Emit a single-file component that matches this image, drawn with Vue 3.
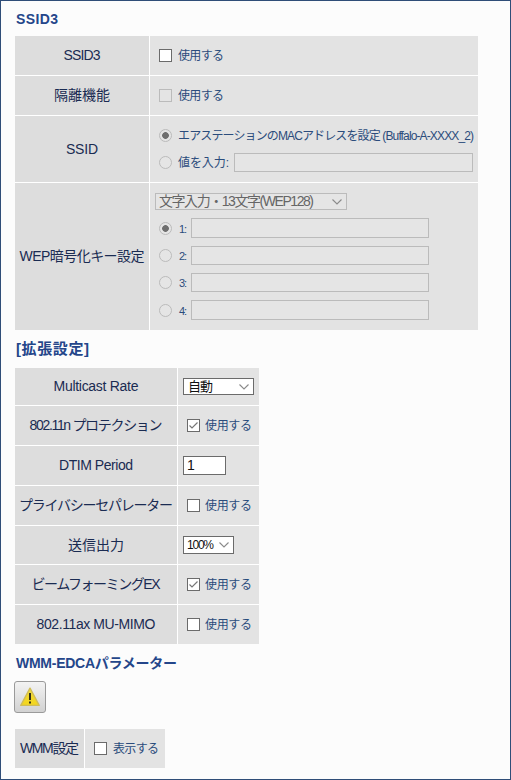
<script setup>
import { ref } from 'vue';

const ssidEnabled = ref(false);
const isolation = ref(false);
const ssidMode = ref('mac');
const ssidValue = ref('');
const wepIndex = ref(1);
const wepKeys = ref(['', '', '', '']);

const advanced = ref([
  { id: 'rate', label: 'Multicast Rate', fit: 85, type: 'select', value: '自動', valueFit: 25 },
  { id: 'protection', label: '802.11n プロテクション', fit: 133, type: 'check', value: true },
  { id: 'dtim', label: 'DTIM Period', fit: 74, type: 'text', value: '1' },
  { id: 'privacy', label: 'プライバシーセパレーター', fit: 154, type: 'check', value: false },
  { id: 'power', label: '送信出力', fit: 56, type: 'select', value: '100%', valueFit: 27 },
  { id: 'beam', label: 'ビームフォーミングEX', fit: 129, type: 'check', value: true },
  { id: 'mumimo', label: '802.11ax MU-MIMO', fit: 119, type: 'check', value: false },
]);

const wmmVisible = ref(false);

// Spreads the letters of an element so the text fills the given width
const vFit = {
  mounted(el, { value }) {
    const count = el.textContent.trim().length;
    const natural = el.getBoundingClientRect().width;
    el.style.letterSpacing = `${(value - natural) / Math.max(count - 1, 1)}px`;
    el.style.width = `${value}px`;
  },
};
</script>

<template>
  <div class="panel">
    <h2 class="heading"><span v-fit="42">SSID3</span></h2>

    <div class="table ssid">
      <div class="row">
        <div class="label"><span v-fit="37">SSID3</span></div>
        <div class="cell">
          <label class="option">
            <input v-model="ssidEnabled" type="checkbox" />
            <span v-fit="46">使用する</span>
          </label>
        </div>
      </div>
      <div class="row">
        <div class="label"><span v-fit="56">隔離機能</span></div>
        <div class="cell">
          <label class="option">
            <input v-model="isolation" type="checkbox" disabled />
            <span v-fit="46">使用する</span>
          </label>
        </div>
      </div>
      <div class="row mode">
        <div class="label"><span v-fit="32">SSID</span></div>
        <div class="cell stack">
          <label class="option">
            <input v-model="ssidMode" type="radio" value="mac" disabled />
            <span v-fit="296">エアステーションのMACアドレスを設定 (Buffalo-A-XXXX_2)</span>
          </label>
          <label class="option">
            <input v-model="ssidMode" type="radio" value="manual" disabled />
            <span v-fit="51">値を入力:</span>
            <input v-model="ssidValue" class="field ssid-field" type="text" disabled />
          </label>
        </div>
      </div>
      <div class="row wep">
        <div class="label"><span v-fit="125">WEP暗号化キー設定</span></div>
        <div class="cell stack">
          <div class="select disabled wep-select">
            <span v-fit="155">文字入力・13文字(WEP128)</span>
            <svg class="chevron" viewBox="0 0 10 6"><path d="M0.5 0.5 5 5 9.5 0.5" /></svg>
          </div>
          <label v-for="(key, i) in wepKeys" :key="i" class="option key">
            <input v-model="wepIndex" type="radio" name="wep" :value="i + 1" disabled />
            <span class="num" v-fit="8">{{ i + 1 }}:</span>
            <input v-model="wepKeys[i]" class="field key-field" type="text" disabled />
          </label>
        </div>
      </div>
    </div>

    <h2 class="heading advanced-heading"><span v-fit="73">[拡張設定]</span></h2>

    <div class="table advanced">
      <div v-for="item in advanced" :key="item.id" class="row" :class="item.id">
        <div class="label"><span v-fit="item.fit">{{ item.label }}</span></div>
        <div class="cell">
          <div v-if="item.type === 'select'" class="select">
            <span v-fit="item.valueFit">{{ item.value }}</span>
            <svg class="chevron" viewBox="0 0 10 6"><path d="M0.5 0.5 5 5 9.5 0.5" /></svg>
          </div>
          <input v-else-if="item.type === 'text'" v-model="item.value" class="field dtim-field" type="text" />
          <label v-else class="option">
            <input v-model="item.value" type="checkbox" />
            <span v-fit="47">使用する</span>
          </label>
        </div>
      </div>
    </div>

    <h2 class="heading wmm-heading"><span v-fit="161">WMM-EDCAパラメーター</span></h2>

    <button class="warn-btn" type="button">
      <svg viewBox="0 0 20 20" width="20" height="20">
        <defs>
          <linearGradient id="warn" x1="0" y1="0" x2="0" y2="1">
            <stop offset="0" stop-color="#f3dc3c" />
            <stop offset="1" stop-color="#f3d51c" />
          </linearGradient>
        </defs>
        <path d="M10 1.2 19.2 18.4H.8Z" fill="url(#warn)" stroke="#d0bd58" stroke-width="1.4" stroke-linejoin="round" />
        <path d="M9 6h2v7H9zM9 14.4h2v2H9z" fill="#33301c" />
      </svg>
    </button>

    <div class="table wmm">
      <div class="row">
        <div class="label"><span v-fit="59">WMM設定</span></div>
        <div class="cell">
          <label class="option">
            <input v-model="wmmVisible" type="checkbox" />
            <span v-fit="46">表示する</span>
          </label>
        </div>
      </div>
    </div>
  </div>
</template>

<style>
body {
  margin: 0;
  background: #fcfcfc;
}
</style>

<style scoped>
.panel {
  box-sizing: border-box;
  width: 511px;
  height: 780px;
  padding: 0 14px;
  overflow: hidden;
  border: 1px solid #2f4d78;
  background: #fcfcfc;
  font-family: 'Liberation Sans', 'Noto Sans CJK JP', sans-serif;
  color: #2b4c7c;
}

.panel span {
  display: inline-block;
  white-space: nowrap;
}

.heading {
  display: flex;
  align-items: center;
  height: 35px;
  margin: 0;
  padding-left: 1px;
  font-size: 14px;
  line-height: 16px;
  font-weight: 700;
  color: #24468a;
}

.advanced-heading {
  height: 38px;
  font-size: 15px;
}

.wmm-heading {
  height: 37px;
}

/* Tables */
.table {
  display: flex;
  flex-direction: column;
  gap: 1px;
  background: #fff;
}

.table.ssid { width: 463px; }
.table.advanced { width: 244px; }
.table.wmm { width: 150px; margin-top: 16px; }

.row {
  display: flex;
  gap: 1px;
  height: 39px;
}

.row.mode { height: 66px; }
.row.wep { height: 147px; }
.row.rate { height: 37px; }
.row.power { height: 38px; }

.label {
  display: flex;
  flex: none;
  align-items: center;
  justify-content: center;
  width: 134px;
  background: #ddd;
  color: #1a2b52;
  font-size: 14px;
  line-height: 16px;
  padding-bottom: 1px;
  box-sizing: border-box;
}

.advanced .label { width: 162px; }
.wmm .label { width: 69px; }

.cell {
  display: flex;
  flex: 1;
  align-items: center;
  padding-left: 5px;
  background: #e3e3e3;
  font-size: 12px;
  line-height: 14px;
}

.cell.stack {
  flex-direction: column;
  align-items: flex-start;
}

.mode .cell {
  justify-content: center;
  gap: 8px;
}

.option {
  display: flex;
  align-items: center;
  height: 19px;
  padding-left: 4px;
}

/* Controls */
input[type='checkbox'],
input[type='radio'] {
  appearance: none;
  flex: none;
  box-sizing: border-box;
  width: 13px;
  height: 13px;
  margin: 0 6px 0 0;
  border: 1px solid #6b6b6b;
  background: #fff;
}

.advanced input[type='checkbox'] { margin-right: 5px; }

input[type='checkbox']:checked {
  background: #fff url("data:image/svg+xml,%3Csvg xmlns='http://www.w3.org/2000/svg' viewBox='0 0 11 11'%3E%3Cpath d='M1.5 5.5 4 8 9.5 2.5' fill='none' stroke='%23777' stroke-width='1.2'/%3E%3C/svg%3E");
}

input[type='checkbox']:disabled {
  border-color: #bbb;
  background: #e4e4e4;
}

input[type='radio'] {
  border-color: #bbb;
  border-radius: 50%;
  background: #e5e5e5;
}

input[type='radio']:checked {
  background: radial-gradient(circle, #6f6f6f 3px, #e5e5e5 3.7px);
}

.field {
  box-sizing: border-box;
  height: 19px;
  margin: 0;
  padding: 0 3px 1px;
  border: 1px solid #6b6b6b;
  border-radius: 0;
  outline: none;
  background: #fff;
  color: #111;
  font: 14px/16px 'Liberation Sans', 'Noto Sans CJK JP', sans-serif;
}

.field:disabled {
  border-color: #bbb;
  background: #e5e5e5;
}

.ssid-field {
  width: 239px;
  margin-left: 5px;
}

.dtim-field {
  width: 43px;
}

.select {
  display: flex;
  align-items: center;
  justify-content: space-between;
  box-sizing: border-box;
  width: 71px;
  height: 17px;
  padding: 0 4px 0 3px;
  border: 1px solid #6b6b6b;
  background: #fff;
  color: #111;
  font-size: 13px;
  line-height: 15px;
}

.select span {
  margin-top: -1px;
}

.rate .select {
  padding-left: 4px;
}

.power .select {
  width: 51px;
  height: 18px;
  font-size: 12px;
}

.power .select span {
  margin-top: 1px;
}

.select.disabled {
  border-color: #bbb;
  background: #e5e5e5;
  color: #666;
}

.chevron {
  width: 10px;
  height: 6px;
  fill: none;
  stroke: #8a8a8a;
  stroke-width: 1.1;
}

.wep-select {
  width: 192px;
  margin: 10px 0 8px;
  font-size: 14px;
}

.key {
  height: 20px;
  margin-bottom: 7.4px;
}

.key .num {
  margin: 1px 4px 0 1px;
  font-size: 11px;
}

.key-field {
  width: 238px;
}

.key:nth-of-type(1) .key-field,
.key:nth-of-type(4) .key-field {
  height: 20px;
}

/* Warning button */
.warn-btn {
  display: flex;
  align-items: center;
  justify-content: center;
  box-sizing: border-box;
  width: 32px;
  height: 32px;
  margin: 0 0 0 -1px;
  padding: 0;
  border: 1px solid #9a9a9a;
  border-radius: 3px;
  background: linear-gradient(#f3f3f3, #d2d2d2);
}
</style>
